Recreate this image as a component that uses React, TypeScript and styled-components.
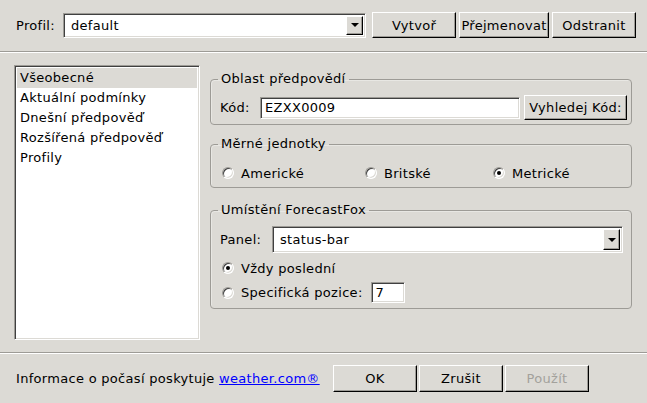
import React from 'react';
import styled, { createGlobalStyle, css } from 'styled-components';

const GlobalStyle = createGlobalStyle`
  html, body {
    margin: 0;
    padding: 0;
    background: #dcdad5;
  }
  body {
    font-family: "DejaVu Sans", Verdana, sans-serif;
    font-size: 13px;
    letter-spacing: 0.3px;
    color: #000;
  }
`;

const sunken = css`
  box-sizing: border-box;
  border: 1px solid;
  border-color: #9d9b96 #ffffff #ffffff #9d9b96;
  box-shadow: inset 1px 1px 0 #404040, inset -1px -1px 0 #dcdad5;
  background: #ffffff;
`;

const raised = css`
  box-sizing: border-box;
  border: 1px solid;
  border-color: #ffffff #000000 #000000 #ffffff;
  box-shadow: inset -1px -1px 0 #9d9b96;
  background: #dcdad5;
`;

const Window = styled.div`
  width: 647px;
  height: 403px;
  display: flex;
  flex-direction: column;
  overflow: hidden;
`;

const TopBar = styled.div`
  display: flex;
  align-items: center;
  height: 26px;
  padding: 12px 11px 0 16px;
`;

const Label = styled.span<{ $w: number }>`
  width: ${(p) => p.$w}px;
  flex: 0 0 auto;
  white-space: nowrap;
`;

const ButtonRow = styled.div<{ $gap: number }>`
  display: flex;
  gap: ${(p) => p.$gap}px;
`;

const Button = styled.button<{ $w: number; $h?: number }>`
  ${raised};
  width: ${(p) => p.$w}px;
  height: ${(p) => p.$h ?? 26}px;
  padding: 0;
  font: inherit;
  letter-spacing: inherit;
  color: #000;
  white-space: nowrap;
  &:disabled {
    color: #a3a19c;
  }
`;

const Separator = styled.div<{ $top: number }>`
  margin-top: ${(p) => p.$top}px;
  border-top: 1px solid #9d9b96;
  border-bottom: 1px solid #ffffff;
`;

const SelectBox = styled.div<{ $w?: number; $h: number }>`
  ${sunken};
  display: flex;
  align-items: stretch;
  height: ${(p) => p.$h}px;
  ${(p) => (p.$w ? `width: ${p.$w}px;` : 'flex: 1;')}
  padding: 2px;
`;

const SelectText = styled.span`
  flex: 1;
  display: flex;
  align-items: center;
  padding-left: 5px;
`;

const DropButton = styled.span`
  ${raised};
  width: 17px;
  display: flex;
  align-items: center;
  justify-content: center;
  &::after {
    content: '';
    border-left: 4px solid transparent;
    border-right: 4px solid transparent;
    border-top: 4px solid #000;
  }
`;

const Select: React.FC<{ value: string; w?: number; h: number }> = ({ value, w, h }) => (
  <SelectBox $w={w} $h={h}>
    <SelectText>{value}</SelectText>
    <DropButton />
  </SelectBox>
);

const Main = styled.div`
  display: flex;
  gap: 10px;
  height: 299px;
  box-sizing: border-box;
  padding: 12px 15px 12px 14px;
`;

const ListBox = styled.div`
  ${sunken};
  width: 186px;
  height: 275px;
  padding: 2px;
`;

const ListItem = styled.div<{ $selected?: boolean }>`
  height: 20px;
  line-height: 20px;
  padding-left: 3px;
  white-space: nowrap;
  background: ${(p) => (p.$selected ? '#dcdad5' : 'transparent')};
`;

const RightColumn = styled.div`
  width: 422px;
  padding-top: 6px;
  display: flex;
  flex-direction: column;
`;

const Group = styled.fieldset<{ $top?: number; $pad: string }>`
  margin: ${(p) => p.$top ?? 0}px 0 0 0;
  padding: ${(p) => p.$pad};
  border: 1px solid #9d9b96;
  border-radius: 4px;
  min-width: 0;
  box-shadow: inset 1px 1px 0 rgba(255, 255, 255, 0.35);
`;

const Legend = styled.legend<{ $shift?: number }>`
  padding: 0 3px;
  margin-left: ${(p) => p.$shift ?? -2}px;
  line-height: 16px;
`;

const Row = styled.div<{ $h: number; $top?: number; $indent?: number }>`
  display: flex;
  align-items: center;
  height: ${(p) => p.$h}px;
  margin-top: ${(p) => p.$top ?? 0}px;
  padding-left: ${(p) => p.$indent ?? 0}px;
`;

const TextInput = styled.div<{ $w?: number; $h: number; $left?: number }>`
  ${sunken};
  height: ${(p) => p.$h}px;
  ${(p) => (p.$w ? `width: ${p.$w}px;` : 'flex: 1;')}
  margin-left: ${(p) => p.$left ?? 0}px;
  display: flex;
  align-items: center;
  padding-left: 4px;
`;

const RadioOption = styled.label<{ $w?: number }>`
  display: flex;
  align-items: center;
  gap: 7px;
  ${(p) => (p.$w ? `width: ${p.$w}px;` : '')}
  white-space: nowrap;
`;

const RadioCircle = styled.span<{ $checked?: boolean }>`
  ${sunken};
  width: 12px;
  height: 12px;
  border-radius: 50%;
  display: flex;
  align-items: center;
  justify-content: center;
  ${(p) =>
    p.$checked &&
    css`
      &::after {
        content: '';
        width: 4px;
        height: 4px;
        border-radius: 50%;
        background: #000;
      }
    `}
`;

const Radio: React.FC<{ label: string; checked?: boolean; w?: number }> = ({ label, checked, w }) => (
  <RadioOption $w={w}>
    <RadioCircle $checked={checked} />
    {label}
  </RadioOption>
);

const Footer = styled.div`
  display: flex;
  align-items: center;
  height: 27px;
  padding: 11px 58px 0 16px;
`;

const FooterText = styled.span`
  white-space: nowrap;
  a {
    color: #0000ff;
    text-decoration: underline;
  }
`;

const TopButtons = styled(ButtonRow)`
  margin-left: 6px;
`;

const FooterButtons = styled(ButtonRow)`
  margin-left: auto;
`;

const categories = [
  'Všeobecné',
  'Aktuální podmínky',
  'Dnešní předpověď',
  'Rozšířená předpověď',
  'Profily',
];

export default function App() {
  return (
    <Window>
      <GlobalStyle />
      <TopBar>
        <Label $w={47}>Profil:</Label>
        <Select value="default" w={303} h={25} />
        <TopButtons $gap={3}>
          <Button $w={84}>Vytvoř</Button>
          <Button $w={90}>Přejmenovat</Button>
          <Button $w={84}>Odstranit</Button>
        </TopButtons>
      </TopBar>
      <Separator $top={13} />
      <Main>
        <ListBox>
          {categories.map((c, i) => (
            <ListItem key={c} $selected={i === 0}>
              {c}
            </ListItem>
          ))}
        </ListBox>
        <RightColumn>
          <Group $pad="8px 4px 4px 9px">
            <Legend>Oblast předpovědí</Legend>
            <Row $h={25}>
              <Label $w={40}>Kód:</Label>
              <TextInput $w={260} $h={22}>EZXX0009</TextInput>
              <Button $w={103} $h={25} style={{ marginLeft: 4 }}>
                Vyhledej Kód:
              </Button>
            </Row>
          </Group>
          <Group $top={11} $pad="13px 5px 6px 11px">
            <Legend $shift={-4}>Měrné jednotky</Legend>
            <Row $h={16}>
              <Radio label="Americké" w={143} />
              <Radio label="Britské" w={128} />
              <Radio label="Metrické" checked />
            </Row>
          </Group>
          <Group $top={14} $pad="8px 8px 5px 9px">
            <Legend>Umístění ForecastFox</Legend>
            <Row $h={27}>
              <Label $w={52}>Panel:</Label>
              <Select value="status-bar" h={27} />
            </Row>
            <Row $h={16} $top={7} $indent={2}>
              <Radio label="Vždy poslední" checked />
            </Row>
            <Row $h={21} $top={6} $indent={2}>
              <Radio label="Specifická pozice:" />
              <TextInput $w={34} $h={21} $left={8}>
                7
              </TextInput>
            </Row>
          </Group>
        </RightColumn>
      </Main>
      <Separator $top={0} />
      <Footer>
        <FooterText>
          Informace o počasí poskytuje <a href="#">weather.com®</a>
        </FooterText>
        <FooterButtons $gap={2}>
          <Button $w={84} $h={27}>OK</Button>
          <Button $w={84} $h={27}>Zrušit</Button>
          <Button $w={84} $h={27} disabled>
            Použít
          </Button>
        </FooterButtons>
      </Footer>
    </Window>
  );
}
